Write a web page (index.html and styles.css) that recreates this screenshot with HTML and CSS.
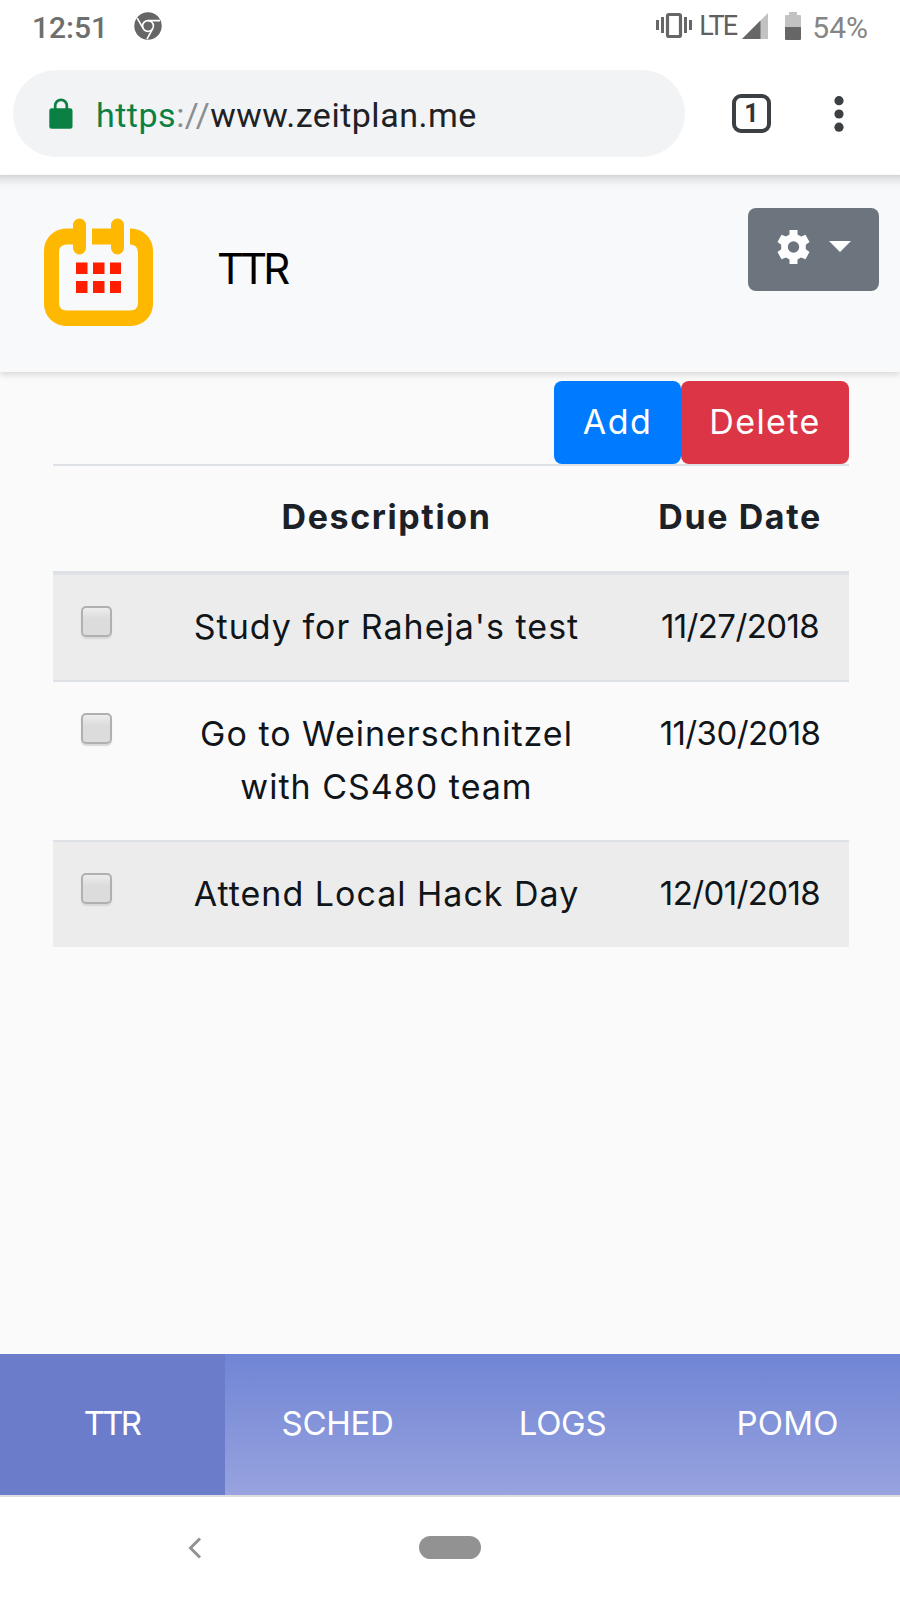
FILE: index.html
```html
<!DOCTYPE html>
<html lang="en">
<head>
<meta charset="utf-8">
<title>Zeitplan</title>
<link rel="stylesheet" href="styles.css">
</head>
<body>
<div class="status">
  <span class="clock">12:51</span>
  <svg class="chrome" width="28" height="28" viewBox="0 0 28 28"><circle cx="14" cy="14" r="13.7" fill="#666"/><circle cx="14" cy="14" r="5.4" fill="#666" stroke="#fff" stroke-width="1.6"/><path d="M14 8.6H26M9.3 16.7L3.2 6.2M18.7 16.7L13 27" stroke="#fff" stroke-width="1.6" fill="none"/></svg>
  <span class="grow"></span>
  <svg class="vibrate" width="36" height="28" viewBox="0 0 36 28"><g fill="#666"><path d="M0 8h3v10H0zM5 5h3v16H5zM28 5h3v16h-3zM33 8h3v10h-3z"/></g><rect x="11.500" y="2.500" width="13" height="22" rx="1.500" fill="none" stroke="#666" stroke-width="3.200"/></svg>
  <span class="lte">LTE</span>
  <svg class="signal" width="26" height="26" viewBox="0 0 26 26"><path d="M26 0V26H0z" fill="#c2c2c2"/><path d="M18.500 7.500V26H0z" fill="#666"/></svg>
  <svg class="battery" width="16" height="28" viewBox="0 0 16 28"><path d="M4 0h8v3h3q1 0 1 1v11H0V4q0-1 1-1h3z" fill="#c2c2c2"/><path d="M0 15h16v12q0 1-1 1H1q-1 0-1-1z" fill="#666"/></svg>
  <span class="percent">54%</span>
</div>
<div class="toolbar">
  <div class="address">
    <svg width="24" height="31" viewBox="0 0 24 31"><path d="M6.200 12V7.600a5.800 5.800 0 0 1 11.600 0V12" fill="none" stroke="#0b8043" stroke-width="2.700"/><rect x="0.300" y="10.300" width="23.200" height="20.400" rx="2.500" fill="#0b8043"/></svg>
    <span class="url"><span class="scheme">https</span><span class="sep">://</span>www.zeitplan.me</span>
  </div>
  <span class="tabs">1</span>
  <svg class="dots" width="10" height="36" viewBox="0 0 10 36"><g fill="#3c4043"><circle cx="5" cy="4.700" r="4.600"/><circle cx="5" cy="18" r="4.600"/><circle cx="5" cy="31.200" r="4.600"/></g></svg>
</div>
<header class="header">
  <svg class="logo" width="110" height="108" viewBox="0 0 110 108"><path class="ring" d="M29 10.500H22A22 22 0 0 0 0 32.500V86A22 22 0 0 0 22 108H87A22 22 0 0 0 109 86V32.500A22 22 0 0 0 87 10.500H86V26.500Q94 26.500 94 35V85Q94 92.500 86 92.500H23Q15 92.500 15 85V34Q15 26.500 23 26.500H29V30a6.500 6.500 0 0 0 13 0V7a6.500 6.500 0 0 0-13 0z"/><path class="ring" d="M48 10.500H67V7a6.500 6.500 0 0 1 13 0V30a6.500 6.500 0 0 1-13 0V26.500H48z"/><path fill="#ff1e00" d="M32 44.500h11.500v11.500H32zM49 44.500h11.500v11.500H49zM66 44.500h11v11.500H66zM32 63h11.500v12H32zM49 63h11.500v12H49zM66 63h11v12H66z"/></svg>
  <h1 class="title">TTR</h1>
  <button class="settings"><svg width="33" height="34" viewBox="0 0 33 34"><path fill="#fff" fill-rule="evenodd" d="M12.500 0h8v4.600l3.500 2L28.500 4.800 32.500 12l-3.700 2.800v4.400L32.500 22l-4 7.200-4.500-1.800-3.500 2V34h-8v-4.600l-3.500-2-4.500 1.800L.5 22l3.700-2.800v-4.400L.5 12l4-7.200L9 6.600l3.500-2zM16.500 11.300a5.700 5.700 0 1 0 0 11.400 5.700 5.700 0 0 0 0-11.400z"/></svg><i class="caret"></i></button>
</header>
<main class="main">
  <div class="actions"><button class="btn add">Add</button><button class="btn delete">Delete</button></div>
  <table class="tasks">
    <thead><tr><th class="pick"></th><th>Description</th><th class="date">Due Date</th></tr></thead>
    <tbody>
      <tr><td class="pick"><i class="check"></i></td><td>Study for Raheja's test</td><td class="date">11/27/2018</td></tr>
      <tr><td class="pick"><i class="check"></i></td><td>Go to Weinerschnitzel<br>with CS480 team</td><td class="date">11/30/2018</td></tr>
      <tr><td class="pick"><i class="check"></i></td><td>Attend Local Hack Day</td><td class="date">12/01/2018</td></tr>
    </tbody>
  </table>
</main>
<nav class="nav"><a class="active">TTR</a><a>SCHED</a><a>LOGS</a><a class="pomo">POMO</a></nav>
<div class="system">
  <svg class="back" width="14" height="22" viewBox="0 0 14 22"><path d="M12 1.500L2.500 11L12 20.500" fill="none" stroke="#929292" stroke-width="3"/></svg>
  <i class="home"></i>
</div>
</body>
</html>
```
FILE: styles.css
```css
* { box-sizing: border-box; }
body { margin: 0; width: 900px; height: 1600px; display: flex; flex-direction: column; overflow: hidden; background: #fafafa; font: 400 33px/53px Inter, sans-serif; color: #10151a; }
svg { display: block; flex: none; }
button { border: 0; font: inherit; color: #fff; padding: 0; }
.status { height: 54px; flex: none; display: flex; background: #fff; font: 500 30px/56px Roboto, sans-serif; color: #6e6e6e; padding: 0 32px 0 32px; }
.clock { width: 75px; }
.grow { flex: 1; }
.chrome { margin: 12px 0 0 27px; }
.vibrate { margin: 12px 7px 0 0; }
.lte { width: 37px; font-weight: 400; font-size: 27px; line-height: 53px; letter-spacing: -1.8px; color: #606060; }
.signal { margin: 13px 17px 0 6px; }
.battery { margin: 12px 11px 0 0; }
.percent { font-weight: 400; color: #858585; }
.toolbar { height: 121px; flex: none; background: #fff; padding: 16px 0 0 13px; display: flex; }
.address { width: 672px; height: 87px; border-radius: 44px; background: #f1f3f4; display: flex; align-items: center; padding-left: 36px; }
.address svg { margin-top: -1px; }
.url { margin-left: 23px; padding-top: 4px; font: 400 34px/87px Roboto, sans-serif; letter-spacing: .5px; color: #202124; white-space: nowrap; }
.scheme { color: #0b8043; }
.sep { color: #8a8d90; }
.tabs { width: 39px; height: 39px; margin: 24px 0 0 47px; border: 4px solid #3c4043; border-radius: 9px; font: 700 25px/32px Roboto, sans-serif; text-align: center; color: #303438; }
.dots { margin: 26px 0 0 63px; }
.header { height: 197px; flex: none; display: flex; background: linear-gradient(#d2d4d5 0, #e4e6e8 4px, #f3f5f7 10px, #f8f9fb 16px); box-shadow: 0 3px 6px rgba(0,0,0,.13); padding: 0 21px 0 44px; }
.logo { margin-top: 43px; overflow: visible; }
.ring { fill: #ffb800; }
.title { margin: 64px 0 0 63px; font-weight: 400; font-size: 42px; line-height: 60px; letter-spacing: -4px; color: #000; flex: 1; }
.settings { width: 131px; height: 83px; margin-top: 33px; border-radius: 8px; background: #6c757d; display: flex; padding: 22px 0 0 29px; }
.caret { border: 11px solid transparent; border-top-color: #fff; border-bottom: 0; margin: 11px 0 0 19px; }
.main { flex: 1; padding: 9px 51px 0 53px; }
.actions { display: flex; justify-content: flex-end; height: 83px; }
.btn { height: 83px; border-radius: 8px; font-size: 34px; letter-spacing: 1.4px; padding: 0 0 3px; }
.add { width: 127px; background: #007bff; }
.delete { width: 168px; background: #dc3545; }
.tasks { width: 796px; border-collapse: collapse; table-layout: fixed; text-align: center; letter-spacing: 1px; font-size: 34px; }
.tasks th { height: 108px; padding: 0 0 5px; border-top: 2px solid #dee2e6; font-weight: 700; letter-spacing: 1.6px; color: #1c2127; }
.tasks td { padding: 25px 0 27px; vertical-align: top; border-top: 2px solid #dee2e6; }
.tasks tbody tr:first-child td { border-top-width: 4px; }
.tasks tbody tr:nth-child(odd) { background: #ececec; }
.tasks .pick { width: 89px; }
.date { width: 218px; }
.tasks td.date { font-size: 33px; letter-spacing: -.6px; }
.tasks td.pick { padding-left: 28px; text-align: left; }
.check { display: block; width: 31px; height: 31px; margin-top: 6px; border: 2px solid #b0b0b0; border-radius: 5px; background: linear-gradient(#ededed, #dcdcdc 40%); box-shadow: 0 2px 1px #d8d8d8; }
.nav { height: 141px; flex: none; display: flex; background: linear-gradient(#7085d4, #98a3df); color: #fff; letter-spacing: -.3px; }
.nav a { width: 225px; text-align: center; line-height: 139px; }
.nav .active { background: #6b7dca; letter-spacing: -2.8px; padding-right: 2px; }
.nav .pomo { letter-spacing: .2px; }
.system { height: 105px; flex: none; background: #fff; border-top: 2px solid #dedee0; display: flex; }
.back { margin: 40px 0 0 188px; }
.home { width: 62px; height: 23px; border-radius: 12px; background: #929292; margin: 39px 0 0 217px; }
```
